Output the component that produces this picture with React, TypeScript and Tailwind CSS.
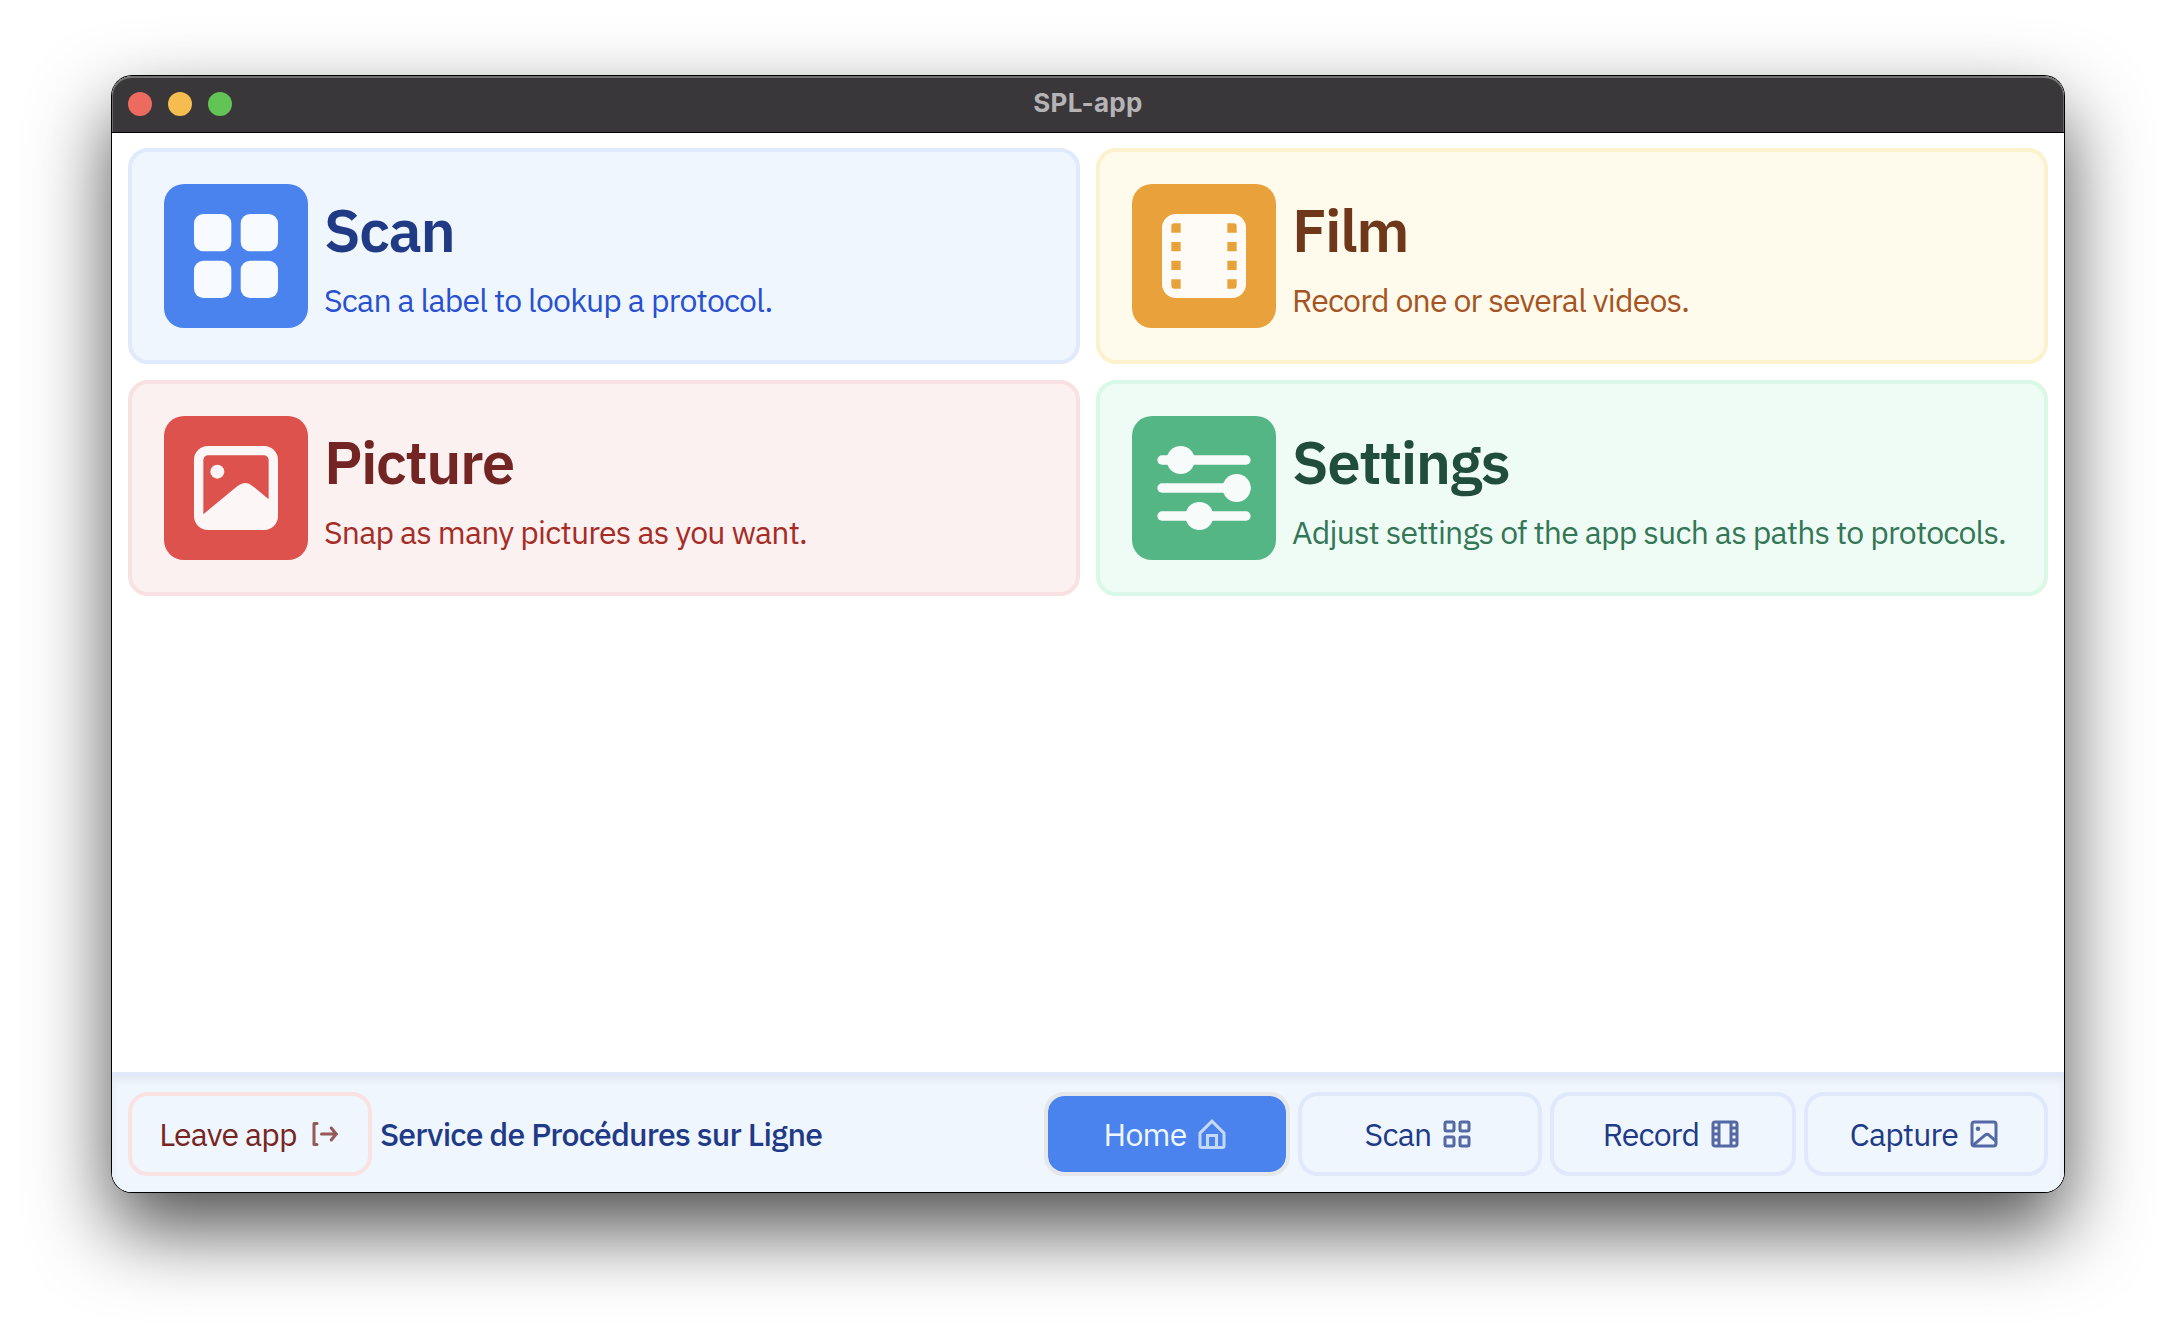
import type { ReactNode } from "react";

type IconProps = { className?: string };

function GridSolid({ className }: IconProps) {
  return (
    <svg viewBox="0 0 24 24" fill="currentColor" className={className}>
      <rect x="3" y="3" width="8" height="8" rx="2" />
      <rect x="13" y="3" width="8" height="8" rx="2" />
      <rect x="3" y="13" width="8" height="8" rx="2" />
      <rect x="13" y="13" width="8" height="8" rx="2" />
    </svg>
  );
}

function FilmSolid({ className }: IconProps) {
  return (
    <svg viewBox="0 0 24 24" fill="currentColor" fillRule="evenodd" className={className}>
      <path d="M6 3h12a3 3 0 0 1 3 3v12a3 3 0 0 1-3 3H6a3 3 0 0 1-3-3V6a3 3 0 0 1 3-3zM5.6 5a.6.6 0 0 0-.6.6V7h2V5zM5 9v2h2V9zM5 13v2h2v-2zM5 17v1.400a.6.6 0 0 0 .6.6H7v-2zM17 5v2h2V5.600a.6.6 0 0 0-.6-.6zM17 9v2h2V9zM17 13v2h2v-2zM17 17v2h1.400a.6.6 0 0 0 .6-.6V17z" />
    </svg>
  );
}

function ImageSolid({ className }: IconProps) {
  return (
    <svg viewBox="0 0 24 24" fill="currentColor" className={className}>
      <path
        fillRule="evenodd"
        d="M6 3h12a3 3 0 0 1 3 3v12a3 3 0 0 1-3 3H6a3 3 0 0 1-3-3V6a3 3 0 0 1 3-3zM6 5a1 1 0 0 0-1 1v11.6L12.2 11.7Q14 10.2 15.6 11.6L19 14.4V6a1 1 0 0 0-1-1z"
      />
      <circle cx="8" cy="8.5" r="1.5" />
    </svg>
  );
}

function SlidersSolid({ className }: IconProps) {
  return (
    <svg viewBox="0 0 24 24" fill="currentColor" className={className}>
      <rect x="2" y="5" width="20" height="2" rx="1" />
      <rect x="2" y="11" width="20" height="2" rx="1" />
      <rect x="2" y="17" width="20" height="2" rx="1" />
      <circle cx="7" cy="6" r="3" />
      <circle cx="19" cy="12" r="3" />
      <circle cx="11" cy="18" r="3" />
    </svg>
  );
}

function LeaveIcon({ className }: IconProps) {
  return (
    <svg viewBox="0 0 24 24" fill="none" stroke="currentColor" strokeWidth="2" strokeLinecap="round" strokeLinejoin="round" className={className}>
      <path d="M8 5H6v14h2M11 12h10M17.5 8l3.3 4-3.3 4" />
    </svg>
  );
}

function HomeIcon({ className }: IconProps) {
  return (
    <svg viewBox="0 0 24 24" fill="none" stroke="currentColor" strokeWidth="2" className={className}>
      <path d="M4 11.4l8-8 8 8V20a1 1 0 0 1-1 1H5a1 1 0 0 1-1-1zM9 20v-7h6v7" />
    </svg>
  );
}

function GridIcon({ className }: IconProps) {
  return (
    <svg viewBox="0 0 24 24" fill="none" stroke="currentColor" strokeWidth="2" className={className}>
      <rect x="4" y="4" width="6" height="6" rx="1" />
      <rect x="14" y="4" width="6" height="6" rx="1" />
      <rect x="4" y="14" width="6" height="6" rx="1" />
      <rect x="14" y="14" width="6" height="6" rx="1" />
    </svg>
  );
}

function FilmIcon({ className }: IconProps) {
  return (
    <svg viewBox="0 0 24 24" fill="currentColor" className={className}>
      <path
        fillRule="evenodd"
        d="M5.5 3h13A2.5 2.5 0 0 1 21 5.500v13a2.500 2.500 0 0 1-2.500 2.500h-13A2.500 2.500 0 0 1 3 18.500v-13A2.500 2.500 0 0 1 5.500 3zM5 5v2h2V5zM5 9v2h2V9zM5 13v2h2v-2zM5 17v2h2v-2zM17 5v2h2V5zM17 9v2h2V9zM17 13v2h2v-2zM17 17v2h2v-2zM9 5v14h6V5z"
      />
    </svg>
  );
}

function ImageIcon({ className }: IconProps) {
  return (
    <svg viewBox="0 0 24 24" fill="none" stroke="currentColor" strokeWidth="2" className={className}>
      <rect x="4" y="4" width="16" height="16" rx="1.6" />
      <path d="M4.600 19.600l8.100-6.900q1.300-1.100 2.600 0L20 16.800" />
      <circle cx="8" cy="8.500" r="1.500" fill="currentColor" stroke="none" />
    </svg>
  );
}

type CardProps = {
  title: string;
  text: string;
  icon: ReactNode;
  card: string;
  tile: string;
  titleColor: string;
  textColor: string;
};

function Card({ title, text, icon, card, tile, titleColor, textColor }: CardProps) {
  return (
    <div className={`flex h-[216px] items-center gap-4 rounded-[20px] border-4 px-8 ${card}`}>
      <div className={`flex size-36 shrink-0 items-center justify-center rounded-[20px] ${tile}`}>{icon}</div>
      <div className="flex flex-col gap-2.5 pt-1.5 whitespace-nowrap">
        <h2 className={`text-[60px] leading-[72px] font-semibold tracking-tight ${titleColor}`}>{title}</h2>
        <p className={`text-[32px] leading-[48px] tracking-tight ${textColor}`}>{text}</p>
      </div>
    </div>
  );
}

function NavButton({ label, icon, className }: { label: string; icon: ReactNode; className: string }) {
  return (
    <button className={`flex h-[84px] items-center justify-center gap-2 rounded-[20px] border-4 text-[32px] leading-[48px] tracking-tight whitespace-nowrap ${className}`}>
      <span>{label}</span>
      {icon}
    </button>
  );
}

export default function App() {
  return (
    <div className="h-[1340px] w-[2176px] overflow-hidden bg-white px-28 pt-[76px] font-['IBM_Plex_Sans',Roboto,sans-serif]">
      <div className="h-[1116px] rounded-[20px] shadow-[0_0_0_1px_#000,0_36px_80px_rgba(0,0,0,0.7)]">
        <div className="flex h-full flex-col overflow-hidden rounded-[20px] bg-white">
          <header className="grid h-14 shrink-0 grid-cols-3 items-center rounded-t-[20px] bg-[#3a373a] px-4 shadow-[inset_0_2px_0_#737272,inset_1px_0_0_#6b6a6b,inset_-1px_0_0_#6b6a6b]">
            <div className="flex gap-4">
              <span className="size-6 rounded-full bg-[#ed6a5f]" />
              <span className="size-6 rounded-full bg-[#f5bd4f]" />
              <span className="size-6 rounded-full bg-[#61c455]" />
            </div>
            <h1 className="pb-0.5 text-center font-[Inter] text-[26px] leading-8 font-bold tracking-[0.3px] text-[#b6b3b6]">SPL-app</h1>
          </header>

          <main className="grid flex-1 grid-cols-2 content-start gap-4 border-t border-black px-4 pt-[15px]">
            <Card
              title="Scan"
              text="Scan a label to lookup a protocol."
              icon={<GridSolid className="size-28 text-[#f7faff]" />}
              card="border-[#dfeafc] bg-[#eff6fe]"
              tile="bg-[#4b83ee]"
              titleColor="text-[#213a85]"
              textColor="text-[#2850d0]"
            />
            <Card
              title="Film"
              text="Record one or several videos."
              icon={<FilmSolid className="size-28 text-[#fefbf7]" />}
              card="border-[#fcf2cd] bg-[#fefbec]"
              tile="bg-[#e9a23b]"
              titleColor="text-[#6f381a]"
              textColor="text-[#a65423]"
            />
            <Card
              title="Picture"
              text="Snap as many pictures as you want."
              icon={<ImageSolid className="size-28 text-[#fdf6f6]" />}
              card="border-[#f8e2e1] bg-[#fcf1f1]"
              tile="bg-[#dd524c]"
              titleColor="text-[#732523]"
              textColor="text-[#a62c26]"
            />
            <Card
              title="Settings"
              text="Adjust settings of the app such as paths to protocols."
              icon={<SlidersSolid className="size-28 text-[#f7fbf9]" />}
              card="border-[#d9f8e6] bg-[#effcf5]"
              tile="bg-[#55b685]"
              titleColor="text-[#214d3c]"
              textColor="text-[#347757]"
            />
          </main>

          <footer className="flex h-[120px] shrink-0 items-center gap-2 border-t-4 border-[#dfe9fb] bg-[#eff6fe] px-4 shadow-[inset_0_4px_8px_rgba(0,0,0,0.06)]">
            <NavButton label="Leave app" icon={<LeaveIcon className="size-9 opacity-75" />} className="w-[244px] border-[#f9e2e1] text-[#772521]" />
            <span className="text-[32px] leading-[48px] font-medium tracking-tight whitespace-nowrap text-[#213a87]">Service de Procédures sur Ligne</span>
            <nav className="ml-auto grid grid-cols-[246px_244px_246px_244px] gap-2">
              <NavButton label="Home" icon={<HomeIcon className="size-9 opacity-75" />} className="border-[#e5e7eb] bg-[#4b83ee] bg-clip-padding text-[#eff6fe]" />
              <NavButton label="Scan" icon={<GridIcon className="size-9 opacity-75" />} className="border-[#dfe9fb] text-[#213a87]" />
              <NavButton label="Record" icon={<FilmIcon className="size-9 opacity-75" />} className="border-[#dfe9fb] text-[#213a87]" />
              <NavButton label="Capture" icon={<ImageIcon className="size-9 opacity-75" />} className="border-[#dfe9fb] text-[#213a87]" />
            </nav>
          </footer>
        </div>
      </div>
    </div>
  );
}
